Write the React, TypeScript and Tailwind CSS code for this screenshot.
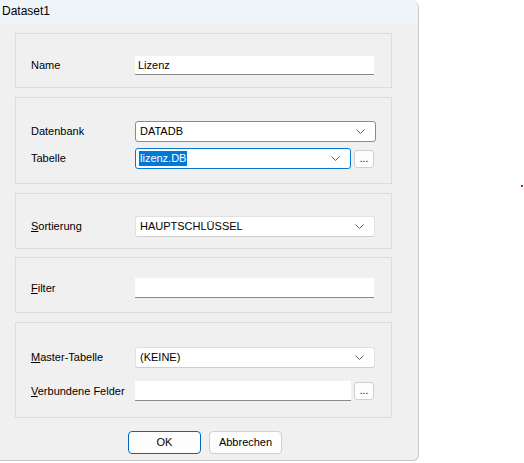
const font = { fontFamily: '"Liberation Sans", Arial, sans-serif' };

function Chevron() {
  return (
    <svg width="9" height="5" viewBox="0 0 9 5" className="shrink-0">
      <path d="M0.5 0.5 L4.5 4.5 L8.5 0.5" fill="none" stroke="#606060" strokeWidth="1" />
    </svg>
  );
}

function Combo({ value, className, selected }: { value: string; className: string; selected?: boolean }) {
  return (
    <div className={`flex items-center justify-between bg-white pl-[3px] pr-[10px] rounded-[3px] ${className}`}>
      {selected ? (
        <span className="bg-[#0078d7] text-white px-[1px] leading-[15px]">{value}</span>
      ) : (
        <span className="pl-[1px]">{value}</span>
      )}
      <Chevron />
    </div>
  );
}

function Dots() {
  return (
    <div className="ml-[3px] flex h-[18px] w-[20px] items-end justify-center rounded-[3px] border border-[#d0d0d0] bg-[#fdfdfd] pb-[3px] text-[10px] leading-[10px]">
      ...
    </div>
  );
}

function Label({ children }: { children: React.ReactNode }) {
  return <div className="w-[104px] shrink-0">{children}</div>;
}

export default function App() {
  return (
    <div className="relative h-[463px] w-[524px] overflow-hidden bg-white text-[11px] text-black" style={font}>
      <div className="flex h-[461px] w-[419px] flex-col overflow-hidden rounded-tr-[8px] rounded-br-[6px] border-r border-b border-[#c8c8c8] bg-[#f0f0f0]">
        <div className="h-[25px] shrink-0 bg-[#eef4f9] pl-[2px] pt-[4px] text-[12px] leading-[14px]">Dataset1</div>

        <div className="flex flex-col pl-[15px]">
          {/* Name */}
          <div className="mt-[8px] h-[55px] w-[377px] border border-[#dcdcdc] pl-[15px] pt-[22px]">
            <div className="flex items-center">
              <Label>Name</Label>
              <div className="flex h-[19px] w-[239px] items-center border-b border-[#8a8a8a] bg-white pl-[3px]">Lizenz</div>
            </div>
          </div>

          {/* Datenbank / Tabelle */}
          <div className="mt-[9px] h-[87px] w-[377px] border border-[#dcdcdc] pl-[15px] pt-[23px]">
            <div className="flex items-center">
              <Label>Datenbank</Label>
              <Combo value="DATADB" className="h-[21px] w-[241px] border border-[#8a8a8a]" />
            </div>
            <div className="mt-[6px] flex items-center">
              <Label>Tabelle</Label>
              <Combo value="lizenz.DB" selected className="h-[21px] w-[216px] border border-[#0078d7]" />
              <Dots />
            </div>
          </div>

          {/* Sortierung */}
          <div className="mt-[9px] h-[56px] w-[377px] border border-[#dcdcdc] pl-[15px] pt-[22px]">
            <div className="flex items-center">
              <Label>
                <span className="underline">S</span>ortierung
              </Label>
              <Combo value="HAUPTSCHLÜSSEL" className="h-[21px] w-[240px] border border-[#e0e0e0] border-b-[#cfcfcf]" />
            </div>
          </div>

          {/* Filter */}
          <div className="mt-[8px] h-[56px] w-[377px] border border-[#dcdcdc] pl-[15px] pt-[20px]">
            <div className="flex items-center">
              <Label>
                <span className="underline">F</span>ilter
              </Label>
              <div className="h-[20px] w-[239px] border-b border-[#8a8a8a] bg-white" />
            </div>
          </div>

          {/* Master */}
          <div className="mt-[9px] h-[96px] w-[377px] border border-[#dcdcdc] pl-[15px] pt-[24px]">
            <div className="flex items-center">
              <Label>
                <span className="underline">M</span>aster-Tabelle
              </Label>
              <Combo value="(KEINE)" className="h-[21px] w-[240px] border border-[#e0e0e0] border-b-[#cfcfcf]" />
            </div>
            <div className="mt-[13px] flex items-center">
              <Label>
                <span className="underline">V</span>erbundene Felder
              </Label>
              <div className="h-[20px] w-[216px] border-b border-[#8a8a8a] bg-white" />
              <Dots />
            </div>
          </div>

          {/* Buttons */}
          <div className="mt-[13px] flex gap-[8px] pl-[113px]">
            <button className="h-[23px] w-[73px] rounded-[4px] border border-[#0067c0] bg-[#fdfdfd] text-[11px]">OK</button>
            <button className="h-[23px] w-[73px] rounded-[4px] border border-[#d0d0d0] bg-[#fdfdfd] text-[11px]">Abbrechen</button>
          </div>
        </div>
      </div>
      <div className="absolute left-[521px] top-[185px] h-[2px] w-[2px] bg-[#e81123]" />
    </div>
  );
}
